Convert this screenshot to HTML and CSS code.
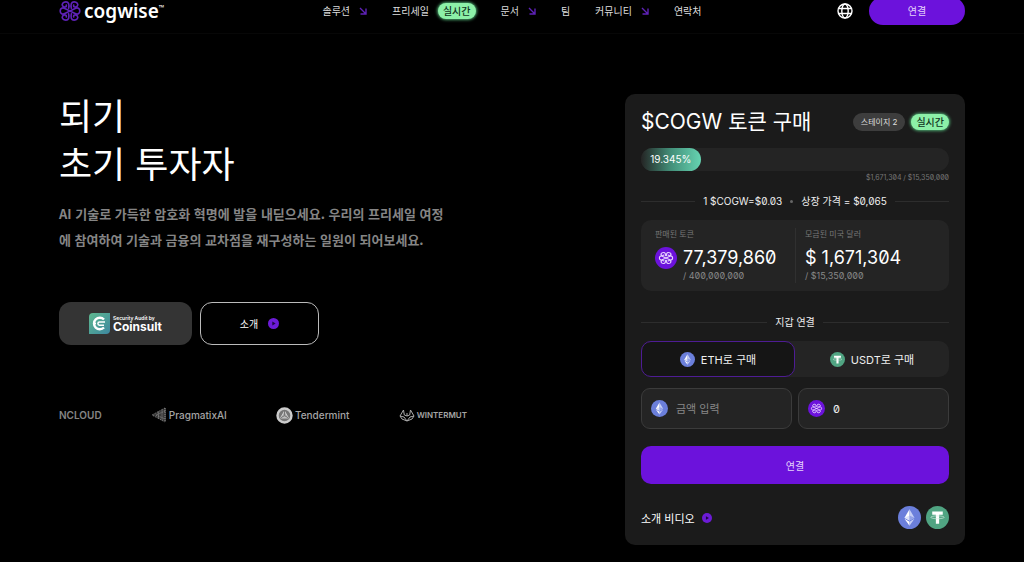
FILE: index.html
```
<!DOCTYPE html>
<html lang="ko">
<head>
    <meta charset="UTF-8">
    <meta name="viewport" content="width=device-width, initial-scale=1.0">
    <title>Cogwise</title>
    <link rel="stylesheet" href="styles.css">
</head>
<body>
    <!-- Shared icons -->
    <svg class="sprite" aria-hidden="true">
        <symbol id="knot" viewBox="0 0 24 24">
            <g fill="none" stroke="currentColor" stroke-width="1.8" stroke-linecap="round" stroke-linejoin="round">
                <path d="M7 9.500C3.500 7.500 1.300 9.500 1.300 12S3.500 16.500 7 14.500L17 9.500C20.500 7.500 22.700 9.500 22.700 12S20.500 16.500 17 14.500z"/>
                <path d="M10.500 9C11.500 5 10.500 2 7.500 2S2.500 4.500 4 6.500s4.500 1.500 4-1"/>
                <path d="M13.500 9C12.500 5 13.500 2 16.500 2s5 2.500 3.500 4.500-4.500 1.500-4-1"/>
                <path d="M10.500 15c1 4 0 7-3 7s-5-2.500-3.500-4.500 4.500-1.500 4 1"/>
                <path d="M13.500 15c-1 4 0 7 3 7s5-2.500 3.500-4.500-4.500-1.500-4 1"/>
            </g>
        </symbol>
        <symbol id="cogw" viewBox="0 0 24 24">
            <circle cx="12" cy="12" r="12" fill="#6c12dc"/>
            <g fill="none" stroke="#e8d4ff" stroke-width="1.300" stroke-linejoin="round">
                <path d="M9 10.600C6.500 9 4.800 10 4.800 12s1.700 3 4.200 1.400l6-2.800c2.500-1.600 4.200-.6 4.200 1.400s-1.700 3-4.200 1.400z"/>
                <path d="M11.200 10c.4-2.400 0-4-1.700-4s-3.500 1-2.700 2.600 2.600 1 2.300-.3"/>
                <path d="M12.800 10c-.4-2.400 0-4 1.700-4s3.500 1 2.700 2.600-2.600 1-2.300-.3"/>
                <path d="M11.200 14c.4 2.400 0 4-1.700 4s-3.500-1-2.700-2.600 2.600-1 2.300.3"/>
                <path d="M12.800 14c-.4 2.400 0 4 1.700 4s3.500-1 2.700-2.600-2.600-1-2.300.3"/>
            </g>
        </symbol>
        <symbol id="eth" viewBox="0 0 24 24">
            <circle cx="12" cy="12" r="12" fill="#6b7fdb"/>
            <path d="M12 3.500L6.800 12.200 12 15.200z" fill="#fff"/>
            <path d="M12 3.500l5.200 8.700L12 15.200z" fill="#c5cef5"/>
            <path d="M12 9.800l-5.200 2.400 5.200 3z" fill="#dce2fa"/>
            <path d="M12 9.800l5.200 2.400-5.200 3z" fill="#93a2e8"/>
            <path d="M6.800 13.400L12 20.500v-4z" fill="#fff"/>
            <path d="M17.200 13.400L12 20.500v-4z" fill="#c5cef5"/>
        </symbol>
        <symbol id="usdt" viewBox="0 0 24 24">
            <circle cx="12" cy="12" r="12" fill="#50a482"/>
            <path d="M6.500 5.800h11v3.200h-3.800V18.500h-3.400V9H6.500z" fill="#fff"/>
            <ellipse cx="12" cy="11.800" rx="7" ry="1.500" fill="none" stroke="#d5ebe1" stroke-width=".7"/>
        </symbol>
        <symbol id="arrow" viewBox="0 0 8 8">
            <path d="M1 1l5.500 5.500M7 1.500V7H1.500" fill="none" stroke="#5f22b8" stroke-width="1.400"/>
        </symbol>
        <symbol id="play" viewBox="0 0 12 12">
            <circle cx="6" cy="6" r="6" fill="#6c1bd6"/>
            <path d="M4.700 3.800L8.300 6 4.700 8.200z" fill="#1d0642"/>
        </symbol>
    </svg>

    <header class="header">
        <a class="logo" href="#">
            <svg width="22" height="22"><use href="#knot"/></svg>
            <span>cogwise<sup>™</sup></span>
        </a>
        <nav>
            <ul class="nav">
                <li><a href="#">솔루션 <svg width="8" height="8"><use href="#arrow"/></svg></a></li>
                <li><a href="#">프리세일 <span class="live">실시간</span></a></li>
                <li><a href="#">문서 <svg width="8" height="8"><use href="#arrow"/></svg></a></li>
                <li><a href="#">팀</a></li>
                <li><a href="#">커뮤니티 <svg width="8" height="8"><use href="#arrow"/></svg></a></li>
                <li><a href="#">연락처</a></li>
            </ul>
        </nav>
        <div class="header-actions">
            <button class="language" type="button" aria-label="언어">
                <svg width="16" height="16" viewBox="0 0 16 16" fill="none" stroke="#fff" stroke-width="1.400">
                    <circle cx="8" cy="8" r="7"/>
                    <ellipse cx="8" cy="8" rx="3.200" ry="7"/>
                    <path d="M1.500 5.500h13M1.500 10.500h13"/>
                </svg>
            </button>
            <button class="connect" type="button">연결</button>
        </div>
    </header>

    <main class="main">
        <section class="hero">
            <h1>되기<br>초기 투자자</h1>
            <p class="lead">AI 기술로 가득한 암호화 혁명에 발을 내딛으세요. 우리의 프리세일 여정에 참여하여 기술과 금융의 교차점을 재구성하는 일원이 되어보세요.</p>
            <div class="hero-buttons">
                <a class="audit" href="#">
                    <svg width="21" height="21" viewBox="0 0 21 21">
                        <defs>
                            <linearGradient id="audit-fill" x1="0" y1="0" x2="1" y2="1">
                                <stop offset="0" stop-color="#5fb98f"/>
                                <stop offset="1" stop-color="#3d87a0"/>
                            </linearGradient>
                        </defs>
                        <path d="M4 0h17v17a4 4 0 0 1-4 4H0V4a4 4 0 0 1 4-4z" fill="url(#audit-fill)"/>
                        <path d="M15 6.500A5.800 5.800 0 1 0 15 14.500" fill="none" stroke="#fff" stroke-width="2.400"/>
                        <path d="M16 9H10.500a1.600 1.600 0 0 0 0 3.200H15M4 10.500h3" fill="none" stroke="#fff" stroke-width="1.500"/>
                    </svg>
                    <span class="audit-text"><small>Security Audit by</small><strong>Coinsult</strong></span>
                </a>
                <a class="about" href="#">소개 <svg width="11" height="11"><use href="#play"/></svg></a>
            </div>
            <ul class="partners">
                <li class="ncloud">NCLOUD</li>
                <li class="pragmatix">
                    <svg width="16" height="16" viewBox="0 0 16 16">
                        <path d="M15 1L1 8l14 7z" fill="#3a3a3a"/>
                        <path d="M14 1L1 8l13 7M14 4L5 8l9 4M11 2.500v11M7.500 4.500v7M14 1v14" fill="none" stroke="#888" stroke-dasharray="1 1"/>
                    </svg>
                    PragmatixAI
                </li>
                <li class="tendermint">
                    <svg width="17" height="17" viewBox="0 0 17 17">
                        <circle cx="8.500" cy="8.500" r="7" fill="#777" stroke="#ccc" stroke-width="2.400"/>
                        <path d="M8.500 4l4 7h-8z" fill="#aaa" stroke="#ddd" stroke-width=".8"/>
                        <path d="M8.500 8.500V4M8.500 8.500l4 2.500M8.500 8.500l-4 2.500" stroke="#777"/>
                    </svg>
                    Tendermint
                </li>
                <li class="wintermute">
                    <svg width="16" height="14" viewBox="0 0 16 14" fill="none" stroke="#aaa" stroke-width="1">
                        <path d="M4.500 2L1 8l2 3 5 2 5-2 2-3-3.500-6-.8 5L8 8 5.300 7zM1 8l4 1 3 4 3-4 4-1M8 8V5"/>
                    </svg>
                    WINTERMUT
                </li>
            </ul>
        </section>

        <section class="card">
            <div class="card-head">
                <h2>$COGW 토큰 구매</h2>
                <span class="stage">스테이지 2</span>
                <span class="live">실시간</span>
            </div>

            <div class="progress">
                <div class="progress-fill" style="width: 19.345%">19.345%</div>
            </div>
            <p class="progress-note">$1,671,304 / $15,350,000</p>

            <div class="divider price"><span>1 $COGW=$0.03</span><i></i><span>상장 가격 = $0,065</span></div>

            <div class="stats">
                <div class="stat">
                    <h3>판매된 토큰</h3>
                    <div class="stat-row">
                        <svg width="22" height="22"><use href="#cogw"/></svg>
                        <div>
                            <strong>77,379,860</strong>
                            <small>/ 400,000,000</small>
                        </div>
                    </div>
                </div>
                <div class="stat">
                    <h3>모금된 미국 달러</h3>
                    <strong>$ 1,671,304</strong>
                    <small>/ $15,350,000</small>
                </div>
            </div>

            <div class="divider wallet">지갑 연결</div>

            <div class="tabs">
                <button class="tab active" type="button"><svg width="15" height="15"><use href="#eth"/></svg>ETH로 구매</button>
                <button class="tab" type="button"><svg width="15" height="15"><use href="#usdt"/></svg>USDT로 구매</button>
            </div>

            <div class="fields">
                <label class="field">
                    <svg width="17" height="17"><use href="#eth"/></svg>
                    <input type="text" placeholder="금액 입력" aria-label="금액 입력">
                </label>
                <label class="field">
                    <svg width="17" height="17"><use href="#cogw"/></svg>
                    <input type="text" value="0" aria-label="COGW">
                </label>
            </div>

            <button class="submit" type="button">연결</button>

            <div class="card-foot">
                <a href="#">소개 비디오 <svg width="10" height="10"><use href="#play"/></svg></a>
                <div class="coins">
                    <svg width="23" height="23"><use href="#eth"/></svg>
                    <svg width="23" height="23"><use href="#usdt"/></svg>
                </div>
            </div>
        </section>
    </main>
</body>
</html>
```

FILE: styles.css
```
* {
    box-sizing: border-box;
}

body {
    margin: 0;
    background-color: #000;
    color: #fff;
    font-family: "Inter", "Noto Sans CJK KR", sans-serif;
    font-feature-settings: "zero";
    font-size: 11px;
}

h1, h2, h3, p, ul {
    margin: 0;
    padding: 0;
    font-weight: 400;
}

ul {
    list-style: none;
}

a {
    color: inherit;
    text-decoration: none;
}

button {
    border: none;
    padding: 0;
    background: none;
    color: inherit;
    font: inherit;
    cursor: pointer;
}

svg {
    display: block;
    flex: none;
}

.sprite {
    position: absolute;
    width: 0;
    height: 0;
}

/* Header */
.header {
    display: grid;
    grid-template-columns: 1fr auto 1fr;
    align-items: center;
    height: 46px;
    margin-top: -12px;
    padding: 0 59px;
    border-bottom: 1px solid #070707;
}

.logo {
    display: flex;
    align-items: center;
    gap: 3px;
    color: #5f22b8;
    font-family: "Noto Sans", sans-serif;
    font-size: 19px;
    font-weight: 600;
    line-height: 20px;
}

.logo span {
    display: flex;
    color: #fff;
}

.logo sup {
    font-size: 7px;
    line-height: 14px;
}

.nav {
    display: flex;
    gap: 25px;
}

.nav a {
    display: flex;
    align-items: center;
    gap: 9px;
    height: 18px;
    color: #ddd;
    font-size: 10px;
}

.live {
    padding: 0 5px;
    border-radius: 9px;
    background-color: #8cf0a8;
    box-shadow: 0 0 3px 1px #4da870;
    color: #12351f;
    font-size: 10px;
    font-weight: 500;
    line-height: 16px;
}

.header-actions {
    display: flex;
    justify-content: flex-end;
    align-items: center;
    gap: 16px;
}

.connect {
    width: 96px;
    height: 28px;
    border-radius: 14px;
    background-color: #6c12dc;
    color: #e5d3fb;
    font-size: 10px;
}

/* Hero */
.main {
    display: flex;
    justify-content: space-between;
    align-items: flex-start;
    gap: 32px;
    padding: 56px 59px 16px;
}

.hero {
    flex: 0 1 408px;
}

h1 {
    font-family: "Noto Sans CJK KR", sans-serif;
    font-size: 36px;
    line-height: 48px;
}

.lead {
    max-width: 392px;
    margin-top: 15px;
    color: #858585;
    font-family: "Noto Sans CJK KR", sans-serif;
    font-size: 13px;
    font-weight: 700;
    line-height: 26px;
}

.hero-buttons {
    display: flex;
    gap: 8px;
    margin-top: 49px;
}

.audit,
.about {
    display: flex;
    justify-content: center;
    align-items: center;
    height: 43px;
    border-radius: 12px;
}

.audit {
    gap: 3px;
    width: 133px;
    background-color: #343434;
}

.audit-text {
    display: flex;
    flex-direction: column;
}

.audit-text small {
    font-size: 5px;
    font-weight: 600;
    line-height: 6px;
}

.audit-text strong {
    font-size: 12px;
    line-height: 12px;
}

.about {
    gap: 10px;
    width: 119px;
    border: 1px solid #bbb;
    font-size: 10px;
}

.partners {
    display: flex;
    justify-content: space-between;
    margin-top: 60px;
    color: #a5a5a5;
    font-weight: 500;
}

.partners li {
    display: flex;
    align-items: center;
    gap: 2px;
    height: 20px;
    font-size: 10px;
}

.partners .ncloud {
    color: #858585;
    font-weight: 600;
}

.partners .wintermute {
    font-size: 8px;
    font-weight: 600;
}

/* Presale card */
.card {
    flex: 0 0 340px;
    margin-top: 4px;
    padding: 16px;
    border-radius: 10px;
    background-color: #1b1b1b;
}

.card-head {
    display: flex;
    align-items: center;
    gap: 6px;
    height: 24px;
}

.card-head h2 {
    flex: 1;
    font-size: 21px;
    line-height: 24px;
    white-space: nowrap;
}

.stage {
    padding: 0 8px;
    border-radius: 9px;
    background-color: #3d3d3d;
    color: #ddd;
    font-size: 8px;
    line-height: 18px;
}

.progress {
    height: 23px;
    margin-top: 14px;
    border-radius: 12px;
    background-color: #242424;
}

.progress-fill {
    height: 23px;
    border-radius: 12px;
    background: linear-gradient(90deg, #242424, #43907a 50%, #66d3b1);
    font-size: 10px;
    line-height: 22px;
    text-align: center;
}

.progress-note {
    color: #777;
    font-size: 7px;
    line-height: 14px;
    text-align: right;
}

.divider {
    display: flex;
    align-items: center;
    gap: 8px;
    color: #eee;
    font-size: 10px;
    line-height: 20px;
}

.divider::before,
.divider::after {
    content: "";
    flex: 1;
    height: 1px;
    background-color: #2d2d2d;
}

.divider i {
    width: 3px;
    height: 3px;
    border-radius: 50%;
    background-color: #666;
}

.price {
    margin-top: 6px;
}

.wallet {
    margin: 21px 0 9px;
}

.stats {
    display: grid;
    grid-template-columns: 1fr 1fr;
    margin-top: 9px;
    padding: 8px 14px;
    border-radius: 10px;
    background-color: #242424;
}

.stat + .stat {
    padding-left: 9px;
    border-left: 1px solid #303030;
}

.stat h3 {
    color: #777;
    font-size: 8px;
    line-height: 12px;
}

.stat strong {
    display: block;
    margin-top: 7px;
    font-size: 18px;
    font-weight: 400;
    line-height: 22px;
}

.stat small {
    display: block;
    color: #888;
    font-size: 9px;
    line-height: 14px;
}

.stat-row {
    display: flex;
    gap: 6px;
}

.stat-row svg {
    margin-top: 7px;
}

.tabs {
    display: grid;
    grid-template-columns: 1fr 1fr;
    border-radius: 10px;
    background-color: #242424;
}

.tab {
    display: flex;
    justify-content: center;
    align-items: center;
    gap: 6px;
    height: 36px;
    border: 1px solid transparent;
    border-radius: 10px;
    color: #eee;
}

.tab.active {
    border-color: #4e1c94;
    background-color: #151515;
}

.fields {
    display: grid;
    grid-template-columns: 1fr 1fr;
    gap: 6px;
    margin-top: 11px;
}

.field {
    display: flex;
    align-items: center;
    gap: 8px;
    height: 41px;
    padding: 0 9px;
    border: 1px solid #3b3b3b;
    border-radius: 9px;
    background-color: #242424;
}

.field input {
    width: 100%;
    min-width: 0;
    border: none;
    padding: 0;
    background: none;
    outline: none;
    color: #eee;
    font: inherit;
    font-feature-settings: "zero";
}

.field input::placeholder {
    color: #888;
}

.submit {
    display: block;
    width: 100%;
    height: 38px;
    margin-top: 17px;
    border-radius: 10px;
    background-color: #6c12dc;
    color: #e5d3fb;
    font-size: 10px;
}

.card-foot {
    display: flex;
    justify-content: space-between;
    align-items: center;
    margin-top: 22px;
}

.card-foot a {
    display: flex;
    align-items: center;
    gap: 7px;
}

.coins {
    display: flex;
    gap: 5px;
}
```
